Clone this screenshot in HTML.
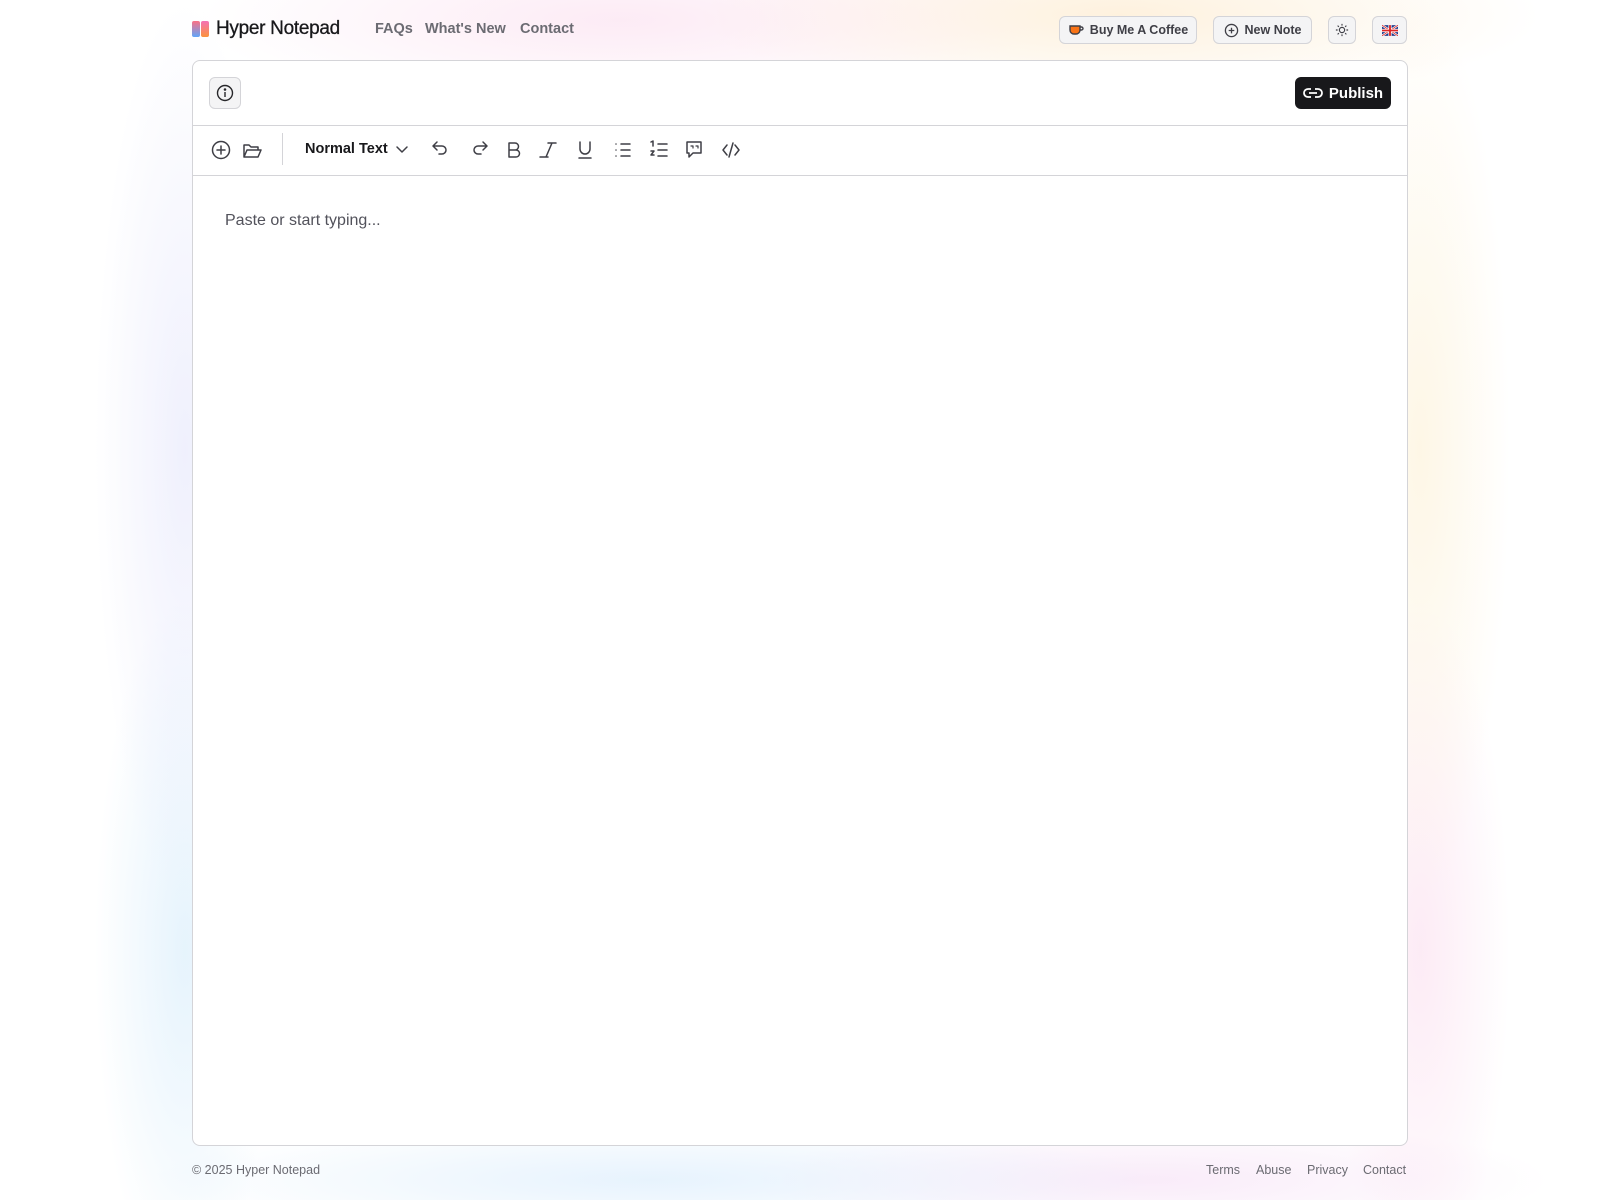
<!DOCTYPE html>
<html><head><meta charset="utf-8"><style>
*{box-sizing:border-box;margin:0;padding:0}
body{width:1600px;height:1200px;overflow:hidden;font-family:"Liberation Sans",sans-serif;color:#18181b;position:relative;background:#fff}
.bg{position:absolute;inset:0;background:
radial-gradient(ellipse 420px 90px at 620px 20px,rgba(250,215,235,.5),transparent),
radial-gradient(ellipse 420px 90px at 1120px 15px,rgba(253,232,200,.6),transparent),
radial-gradient(ellipse 90px 450px at 185px 450px,rgba(220,222,250,.45),transparent),
radial-gradient(ellipse 90px 450px at 1420px 450px,rgba(253,238,205,.5),transparent),
radial-gradient(ellipse 90px 350px at 185px 950px,rgba(205,232,250,.5),transparent),
radial-gradient(ellipse 90px 350px at 1420px 950px,rgba(250,215,235,.5),transparent),
radial-gradient(ellipse 500px 60px at 650px 1180px,rgba(215,235,252,.6),transparent),
radial-gradient(ellipse 400px 60px at 1150px 1180px,rgba(245,222,245,.6),transparent)}
.a{position:absolute}
.nav{font-size:14.5px;color:#6b6b72;font-weight:bold;top:21px}
.btn{position:absolute;top:16px;height:28px;border:1px solid #d4d4d8;border-radius:6px;background:#f4f4f5;font-size:12.5px;font-weight:bold;color:#3f3f46;display:flex;align-items:center;justify-content:center;gap:6px}
.card{position:absolute;left:192px;top:60px;width:1216px;height:1086px;background:#fff;border:1px solid #d4d4d8;border-radius:8px}
.foot{position:absolute;top:1163px;font-size:12.5px;color:#6b6b72}
</style></head><body>
<div class="bg"></div>
<div class="a" style="left:192px;top:21px;width:8px;height:16px;border-radius:2px;background:linear-gradient(#fb7185,#60a5fa)"></div>
<div class="a" style="left:201px;top:21px;width:8px;height:16px;border-radius:2px;background:linear-gradient(#f472b6,#fb923c)"></div>
<div class="a" style="left:216px;top:18px;font-size:19px;letter-spacing:-0.3px;-webkit-text-stroke:0.3px #18181b">Hyper Notepad</div>
<div class="a nav" style="left:375px">FAQs</div>
<div class="a nav" style="left:425px">What's New</div>
<div class="a nav" style="left:520px">Contact</div>
<div class="btn" style="left:1059px;width:138px"><svg width="16" height="14" viewBox="0 0 16 14"><path d="M2 3h10v4a4 4 0 0 1-4 4H6a4 4 0 0 1-4-4z" fill="#f97316" stroke="#3f3f46" stroke-width="1.4"/><path d="M12 4h1.5a1.5 1.5 0 0 1 0 3H12" fill="none" stroke="#3f3f46" stroke-width="1.4"/></svg>Buy Me A Coffee</div>
<div class="btn" style="left:1213px;width:99px"><svg width="15" height="15" viewBox="0 0 16 16" fill="none" stroke="#3f3f46" stroke-width="1.4"><circle cx="8" cy="8" r="6.5"/><path d="M8 5v6M5 8h6"/></svg>New Note</div>
<div class="btn" style="left:1328px;width:28px"><svg width="14" height="14" viewBox="0 0 16 16" fill="none" stroke="#3f3f46" stroke-width="1.3"><circle cx="8" cy="8" r="3"/><path d="M8 1v2M8 13v2M1 8h2M13 8h2M3 3l1.4 1.4M11.6 11.6L13 13M3 13l1.4-1.4M11.6 4.4L13 3"/></svg></div>
<div class="btn" style="left:1372px;width:35px"><svg width="16" height="11" viewBox="0 0 60 40"><rect width="60" height="40" fill="#1e3a8a"/><path d="M0 0L60 40M60 0L0 40" stroke="#fff" stroke-width="8"/><path d="M0 0L60 40M60 0L0 40" stroke="#dc2626" stroke-width="3"/><path d="M30 0v40M0 20h60" stroke="#fff" stroke-width="12"/><path d="M30 0v40M0 20h60" stroke="#dc2626" stroke-width="7"/></svg></div>
<div class="card">
<div class="a" style="left:16px;top:16px;width:32px;height:32px;border:1px solid #d4d4d8;border-radius:6px;background:#f4f4f5;display:flex;align-items:center;justify-content:center"><svg width="18" height="18" viewBox="0 0 18 18" fill="none" stroke="#27272a" stroke-width="1.4"><circle cx="9" cy="9" r="7.5"/><path d="M9 8v5"/><circle cx="9" cy="5.5" r=".6" fill="#27272a"/></svg></div>
<div class="a" style="left:1102px;top:16px;width:96px;height:32px;background:#18181b;border-radius:6px;color:#fff;font-weight:bold;font-size:15px;display:flex;align-items:center;justify-content:center;gap:6px"><svg width="20" height="12" viewBox="0 0 20 12" fill="none" stroke="#fff" stroke-width="1.8"><path d="M8 2H5a4 4 0 0 0 0 8h3M12 2h3a4 4 0 0 1 0 8h-3M6 6h8"/></svg>Publish</div>
<div class="a" style="left:0;right:0;top:64px;border-top:1px solid #d4d4d8"></div>
<div class="a" style="left:0;right:0;top:114px;border-top:1px solid #d4d4d8"></div>
<div class="a" style="left:89px;top:72px;height:32px;border-left:1px solid #d4d4d8"></div>
<div class="a" style="left:112px;top:80px;font-size:14.5px;font-weight:bold">Normal Text</div>
<div class="a" style="left:32px;top:151px;font-size:16px;color:#52525b">Paste or start typing...</div>
</div>
<svg class="a" style="left:0;top:0" width="1600" height="200" fill="none" stroke="#3f3f46" stroke-width="1.5" stroke-linecap="round" stroke-linejoin="round">
<circle cx="221" cy="150" r="8.5"/><path d="M221 146v8M217 150h8"/>
<path d="M244 157v-12h5l2 2h7v3M244 157h14l3-7h-14z"/>
<path d="M397 147l5 5 5-5"/>
<path d="M437 146l-4 4 4 4M433 150h9a4 4 0 0 1 0 8h-3" transform="translate(0,-4)"/>
<path d="M483 146l4 4-4 4M487 150h-9a4 4 0 0 0 0 8h3" transform="translate(0,-4)"/>
<path d="M509 143h6a3.5 3.5 0 0 1 0 7h-6zM509 150h7a3.5 3.5 0 0 1 0 7h-7z"/>
<path d="M548 143h8M540 157h8M552 143l-6 14"/>
<path d="M580 142v7a5 5 0 0 0 10 0v-7M579 158h12"/>
<path d="M616 144h0M616 150h0M616 156h0M621 144h9M621 150h9M621 156h9"/>
<path d="M651 142l2-1v5M651 151h3l-3 4h3M658 144h9M658 150h9M658 156h9"/>
<path d="M687 142h14v11h-8l-4 4v-4h-2z"/><path d="M691 146h2v2M696 146h2v2" stroke-width="1.2"/>
<path d="M727 145l-4 5 4 5M735 145l4 5-4 5M733 143l-4 14"/>
</svg>
<div class="foot" style="left:192px">© 2025 Hyper Notepad</div>
<div class="foot" style="left:1206px">Terms</div>
<div class="foot" style="left:1256px">Abuse</div>
<div class="foot" style="left:1307px">Privacy</div>
<div class="foot" style="left:1363px">Contact</div>
</body></html>
